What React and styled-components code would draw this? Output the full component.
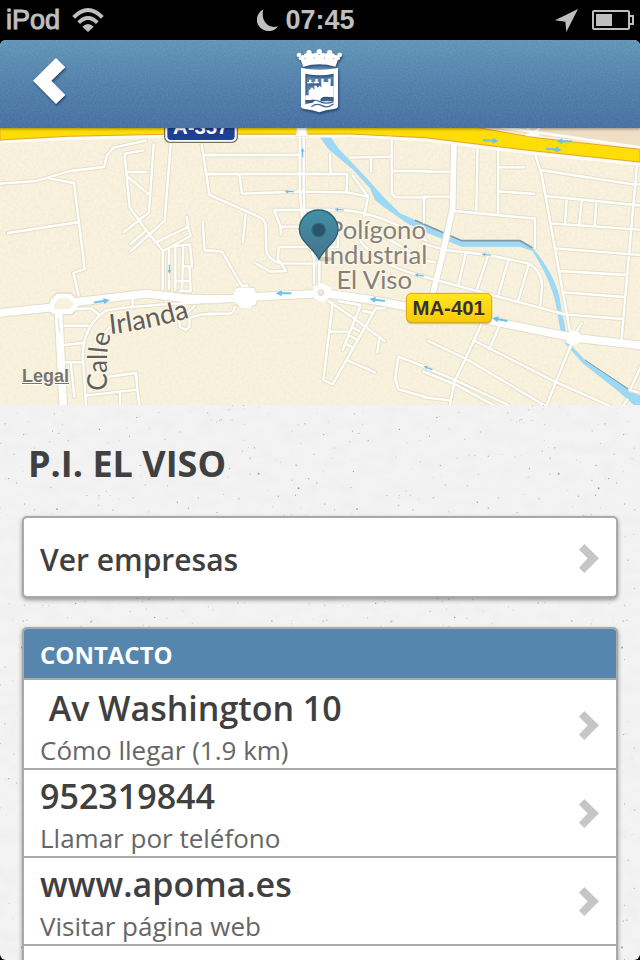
import styled, { createGlobalStyle } from 'styled-components';

const GlobalStyle = createGlobalStyle`
    * {
        box-sizing: border-box;
    }
    body {
        margin: 0;
        background: #000;
        font-family: 'Open Sans', 'Noto Sans', sans-serif;
    }
    h1, h2, ul {
        margin: 0;
        padding: 0;
    }
`;

const Phone = styled.div`
    display: flex;
    flex-direction: column;
    height: 100vh;
    overflow: hidden;
`;

const StatusBar = styled.div`
    display: grid;
    grid-template-columns: 1fr auto 1fr;
    align-items: center;
    flex: none;
    gap: 7px;
    height: 40px;
    padding: 0 6px;
    color: #bfbfbf;
    font-family: 'Liberation Sans', sans-serif;
    font-size: 27px;
    line-height: 38px;
`;

const StatusGroup = styled.div`
    display: flex;
    align-items: center;
    justify-content: ${({ $end }) => ($end ? 'flex-end' : 'flex-start')};
    gap: ${({ $end }) => ($end ? 14 : 12)}px;

    > :nth-child(3) {
        margin-left: auto;
    }
`;

const Carrier = styled.span`
    -webkit-text-stroke: 1px #bfbfbf;
`;

const Clock = styled.time`
    font-weight: 700;
`;

const Screen = styled.div`
    display: flex;
    flex-direction: column;
    flex: 1;
    min-height: 0;
    overflow: hidden;
    border-radius: 6px;
    background: #f3f3f3;
`;

const Header = styled.header`
    position: relative;
    z-index: 1;
    display: grid;
    grid-template-columns: 1fr auto 1fr;
    align-items: center;
    flex: none;
    height: 88px;
    padding-bottom: 6px;
    background: linear-gradient(#6194b6, #507fab 50%, #4470a0);
    box-shadow: 0 1px 3px rgba(0, 0, 0, 0.4);
`;

const Texture = styled.svg`
    position: absolute;
    inset: 0;
    width: 100%;
    height: 100%;
    pointer-events: none;
`;

const BackButton = styled.button`
    justify-self: start;
    padding: 10px 33px;
    border: 0;
    background: none;
    line-height: 0;
    cursor: pointer;
`;

const ShadowSvg = styled.svg`
    position: relative;
    display: block;
    filter: drop-shadow(1px 2px 1px rgba(20, 40, 80, 0.6));
`;

const MapBox = styled.section`
    position: relative;
    flex: none;
    height: 277px;
    background: #f8f1dd;
`;

const MapSvg = styled.svg`
    display: block;
    width: 100%;
    height: 100%;
`;

const LegalLink = styled.a`
    position: absolute;
    left: 22px;
    bottom: 18px;
    color: #77756f;
    font-family: 'Liberation Sans', sans-serif;
    font-size: 18px;
    font-weight: 700;
    line-height: 21px;
    text-shadow: 0 1px 0 #fff;
`;

const Content = styled.main`
    position: relative;
    flex: 1;
    padding: 34px 22px 0;
`;

const Title = styled.h1`
    position: relative;
    padding: 0 6px;
    color: #404040;
    font-size: 36px;
    font-weight: 700;
    line-height: 50px;
`;

const Card = styled.div`
    position: relative;
    margin-top: ${({ $top }) => $top}px;
    overflow: hidden;
    border: 2px solid #a9a9a9;
    border-radius: 5px;
    background: #fff;
    box-shadow: 0 2px 4px rgba(0, 0, 0, 0.4);
`;

const CardHeading = styled.h2`
    height: 51px;
    padding: 1px 16px 0;
    border-bottom: 2px solid #a9a9a9;
    background: #5686ad;
    color: #fff;
    font-size: 24px;
    font-weight: 700;
    line-height: 49px;
`;

const RowLink = styled.a`
    display: flex;
    align-items: center;
    justify-content: space-between;
    height: ${({ $tall }) => ($tall ? 88 : 78)}px;
    padding: ${({ $tall }) => ($tall ? 0 : 2)}px 17px 0 16px;
    border-bottom: ${({ $tall }) => ($tall ? '2px solid #a9a9a9' : '0')};
    color: #404040;
    text-decoration: none;
`;

const RowText = styled.span`
    display: flex;
    flex-direction: column;
    padding-top: ${({ $top }) => $top}px;
    font-size: 30px;
    font-weight: 600;
`;

const RowTitle = styled.span`
    font-size: 34px;
    line-height: 46px;
    white-space: pre;
`;

const RowHint = styled.span`
    color: #666;
    font-size: 26px;
    font-weight: 400;
    line-height: 38px;
`;

const List = styled.ul`
    padding-top: 2px;
    list-style: none;
`;

// The map is drawn in three tiles, each with its own origin
const tiles = [
    {
        x: 0,
        minor: `M-5 176L108 168L210 138L312 126L320 92L340 68L438 47
            M148 160L222 174L254 432L220 444L236 512 M24 324L238 291
            M430 76L374 86L380 155L389 248L448 328L490 378 M380 141H440 M382 155L447 208
            M461 58L447 262L372 321 M512 58L494 287L391 379 M434 320L391 357
            M468 352L564 306L560 275 M564 306L572 332L490 378
            M488 378V492 M507 372V492 M526 366V494 M550 360L546 498
            M520 364L570 358L576 424H548 M568 424L572 498H540 M526 468H570
            M605 58L628 208L645 216 M612 90H650 M622 147H650 M608 290L614 376L645 378
            M230 552L275 550L295 568 M645 530C520 536 380 545 320 556C265 590 250 640 248 690L258 840
            M398 525V545 M194 602H264 M190 660L248 654 M194 712H250 M212 712L223 815
            M258 812L412 794L418 840 M360 800V840 M320 756L408 744L412 794
            M300 690V640L330 606 M560 565L584 543 M645 568H605L570 578L535 575L540 606L558 615L568 605V580`,
        major: 'M-5 564L150 548 M220 532L440 506L560 520L650 523 M176 568L190 850',
    },
    {
        x: 630,
        minor: `M-5 90H270 M-5 147H412 M88 150L96 206L265 200L412 202L474 215L462 275
            M412 147L410 202 M428 152L474 215 M360 88L362 142
            M269 35V190L278 300L312 400V475 M281 35V190L285 300L328 410V475
            M193 255H400C480 262 540 285 650 347 M193 258L212 305V330 M212 305H270
            M-5 208L150 277Q166 285 167 300L169 378Q172 400 210 415L320 416
            M107 268L98 352 M135 414L182 440L228 438L204 402L206 366H384V335
            M-5 376L36 380L95 482H112 M-5 566H62Q72 564 74 545
            M408 32L545 36V205L555 217H650 M420 98L540 95 M483 98V140 M545 138H650 M642 217V290
            M440 310C520 322 560 362 650 405 M448 340Q450 352 480 378C530 420 580 440 650 457
            M355 528L432 580L524 648 M508 640L502 682 M368 535L340 765L368 778L497 550H525
            M460 558L485 563 M360 620H412 M452 540L398 675 M425 606L448 618 M416 630L437 642 M406 655L430 668
            M410 705L495 742 M385 528L450 540 M650 727L565 695L556 760L565 793L650 817`,
        major: 'M-5 523L110 517L300 507L332 503L480 524L650 556 M85 500H125L128 530H90Z',
    },
    {
        x: 1275,
        minor: `M-5 140H72 M-5 215H75 M158 50L154 255 M220 55L219 268 M222 127H298 M222 199L328 207
            M88 258L330 281V370 M-5 355L60 375L190 390L310 415C340 430 350 455 351 485L346 540
            M-5 455L220 515L420 568L595 582 M122 385L100 480 M188 395L157 490 M250 405L220 508
            M312 415L280 525 M-5 405L30 412 M636 115L590 640 M345 135L625 178H650
            M362 213L650 242 M377 295L650 314 M390 370L650 390 M404 438L605 450 M418 502L598 516
            M425 228L420 295 M470 230L463 298 M514 234L509 302 M305 5L318 28L350 5
            M170 595L120 705L88 770L75 840 M222 605L193 672 M150 648L390 770L560 845
            M10 648L130 705L365 845 M440 655L365 840 M470 595L448 630
            M-5 725L90 765L250 840 M-5 740L90 778L215 845 M-5 817L75 826
            M650 720L615 795L640 802 M606 825L596 840 M328 80L350 150L435 620`,
        avenue: 'M87 40L83 250L50 400L20 520',
        major: 'M170 582L440 637L650 662',
    },
];

// x, y, turn in degrees, and whether the arrow stands on a main road
const arrows = [
    [305, 529, -8, true], [508, 432, 90], [908, 83, -90], [868, 200, 180], [1018, 254, 184],
    [851, 505, 180, true], [1132, 525, 188, true], [1500, 584, 190, true], [1258, 451, 190],
    [1472, 47, 3, true], [1693, 49, 182, true], [1661, 73, 5, true], [1459, 389, 186], [1284, 729, 200],
];

const roundabout = 'M154 552L158 530L174 513H208L226 530V546L212 560H160Z';

const contacts = [
    { title: '\u00a0Av Washington 10', hint: 'Cómo llegar (1.9 km)', href: '#mapa' },
    { title: '952319844', hint: 'Llamar por teléfono', href: 'tel:952319844' },
    { title: 'www.apoma.es', hint: 'Visitar página web', href: 'http://www.apoma.es' },
];

// Repeatable scatter of grey grains for the plaster background
const grains = Array.from({ length: 260 }, (_, i) => {
    const rand = (n) => {
        const v = Math.sin((i + 1) * n) * 43758.5453;
        return v - Math.floor(v);
    };
    return { x: rand(12.9898) * 300, y: rand(78.233) * 300, r: 0.6 + rand(37.719) ** 8 / 2, o: 0.15 + rand(93.989) ** 2 * 0.5 };
});

function Roads({ kind, width, color }) {
    return (
        <g fill="none" stroke={color} strokeWidth={width} strokeLinejoin="round" strokeLinecap="round">
            {tiles.map((tile) => (
                <path key={tile.x} transform={`translate(${tile.x} 0)`} d={tile[kind]} />
            ))}
        </g>
    );
}

function Chevron() {
    return (
        <svg width="20" height="29" viewBox="0 0 60 87" aria-hidden="true">
            <path d="M16 0L60 43L16 87L0 71L26 43L0 17Z" fill="#c6c6c6" />
        </svg>
    );
}

function Crest() {
    return (
        <ShadowSvg width="48" height="66" viewBox="34 26 144 198" role="img" aria-label="Ayuntamiento">
            <g fill="#fff">
                <circle cx="43" cy="47" r="7" />
                <circle cx="54" cy="53" r="6" />
                <circle cx="47" cy="57" r="5" />
                <circle cx="65" cy="50" r="8" />
                <circle cx="73" cy="40" r="8" />
                <circle cx="82" cy="50" r="8" />
                <circle cx="94" cy="48" r="8" />
                <circle cx="104" cy="37" r="8" />
                <circle cx="114" cy="48" r="8" />
                <circle cx="126" cy="50" r="8" />
                <circle cx="135" cy="40" r="8" />
                <circle cx="143" cy="50" r="8" />
                <circle cx="154" cy="53" r="6" />
                <circle cx="165" cy="47" r="7" />
                <circle cx="161" cy="57" r="5" />
                <path d="M46 56L56 53L62 60L70 46H78L88 58L98 46H110L120 58L130 46H138L146 60L152 53L162 56L152 82Q104 68 56 82Z" />
                <path
                    fillRule="evenodd"
                    d="M49 86Q104 97 160 86V202Q158 207 148 209Q122 212 104 219Q85 212 60 209Q50 207 49 202Z
                        M62 103Q104 113 147 103V198Q104 208 62 198Z"
                />
                <path d="M62 182V168H72V154L82 144L89 152V141L94 138L99 145L105 139L110 145V118H117V128H131V118H138V140H147V174L125 172Q104 172 108 186H147V200Q104 208 62 200V194L84 190L92 182Z" />
                <path d="M73 121h7v10h-7zM68 128h16v4h-16zM92 119h7v10h-7zM87 127h16v5h-16z" />
            </g>
            <g fill="none" stroke="#3f6790" strokeWidth="4">
                <path d="M66 187Q86 178 106 187T146 187M80 202Q96 190 112 199T146 194M112 177Q126 182 144 176" />
            </g>
        </ShadowSvg>
    );
}

function StreetMap() {
    return (
        <MapSvg viewBox="0 9 1920 831" preserveAspectRatio="xMidYMid slice" role="img" aria-label="Mapa">
            <defs>
                <linearGradient id="pin" x2="0" y2="1">
                    <stop offset="0" stopColor="#4390a6" />
                    <stop offset="1" stopColor="#46748c" />
                </linearGradient>
                <linearGradient id="yellow" x2="0" y2="1">
                    <stop offset="0" stopColor="#ffe720" />
                    <stop offset="1" stopColor="#fbc908" />
                </linearGradient>
                <path id="irlanda" d="M330 627Q460 614 620 562" />
                <path id="calle" d="M322 797V690Q322 650 346 600" />
                <filter id="paper">
                    <feTurbulence type="fractalNoise" baseFrequency="0.12" numOctaves="2" />
                    <feColorMatrix values="0 0 0 0 .6  0 0 0 0 .5  0 0 0 0 .3  .5 0 0 0 -.17" />
                </filter>
            </defs>
            <rect width="1920" height="850" fill="#f9f2de" />
            <rect width="1920" height="850" filter="url(#paper)" opacity=".4" />
            <path d="M1400 0H1920V65L1680 40Z" fill="#efdfc5" />
            <path
                d="M955 30H988L1015 70L1105 165L1150 215L1200 265L1275 298L1385 345H1560L1600 372C1652 430 1680 500 1682 540L1698 620H1682L1668 540C1655 480 1630 430 1597 378L1560 365H1385L1275 321L1225 297L1150 245L1125 225L1110 190L1060 135L985 72Z
                    M1690 650L1712 660L1755 705L1925 815V860L1850 795L1750 716Z"
                fill="#9dd8f5"
            />
            <path d="M1245 286L1385 347H1560L1598 369" fill="none" stroke="#8098a6" strokeWidth="5" />
            <path d="M1755 705L1890 796" fill="none" stroke="#8098a6" strokeWidth="3" />
            <Roads kind="minor" width="13" color="#e4e0ca" />
            <Roads kind="avenue" width="23" color="#e2decb" />
            <Roads kind="major" width="29" color="#e2decb" />
            <path d={roundabout} fill="none" stroke="#e2decb" strokeWidth="22" strokeLinejoin="round" />
            <Roads kind="minor" width="7" color="#fff" />
            <Roads kind="avenue" width="17" color="#fff" />
            <Roads kind="major" width="23" color="#fff" />
            <path d="M175 580L178 622" stroke="#e2decb" strokeWidth="3" />
            <path d={roundabout} fill="#f8f1dd" stroke="#fff" strokeWidth="14" strokeLinejoin="round" />
            <path d="M700 505L716 488H750L768 508L764 530L750 548H724L706 532Z" fill="#fff" />
            <path d="M940 485L965 475L992 488L998 510L970 532L942 520Z" fill="#fff" />
            <circle cx="963" cy="503" r="8" fill="#f4edd9" stroke="#d9d3be" strokeWidth="3" />
            <circle cx="1720" cy="638" r="22" fill="#fff" />
            <path d="M0 51L200 41L480 35L1050 33L1275 45L1495 73L1605 86L1920 118M1500 6L1920 67" fill="none" stroke="#fffdf4" strokeWidth="8" />
            <path d="M0 0H1390L1605 38L1920 73V111L1605 78L1495 65L1275 38L1050 27L480 28L200 34L0 45Z" fill="#ffde08" stroke="#e6a52b" strokeWidth="3" />
            <path d="M884 34L890 24V5H920V24L926 34Z" fill="#fff" stroke="#e2decb" strokeWidth="2" />
            <path d="M1580 26H1614L1620 34H1576Z" fill="#fff" />
            {arrows.map(([x, y, turn, main]) => (
                <path
                    key={`${x}-${y}`}
                    transform={`translate(${x} ${y}) rotate(${turn}) scale(${main ? 1 : 0.6})`}
                    d="M-23 -3H6V-9L24 0L6 9V3H-23Z"
                    fill="#6bc1ee"
                />
            ))}
            <g fontFamily="Lato, sans-serif" fill="#605e5a" stroke="#fbf6e6" strokeWidth="8" paintOrder="stroke" strokeLinejoin="round">
                <text fontSize="82"><textPath href="#irlanda">Irlanda</textPath></text>
                <text fontSize="79"><textPath href="#calle">Calle</textPath></text>
                <g fill="#85817a" fontSize="77">
                    <text x="1278" y="342" textAnchor="end">Polígono</text>
                    <text x="1282" y="418" textAnchor="end">Industrial</text>
                    <text x="1236" y="493" textAnchor="end">El Viso</text>
                </g>
            </g>
            <rect x="494" y="-30" width="218" height="82" rx="16" fill="#fff" stroke="#77736a" strokeWidth="4" />
            <rect x="502" y="-30" width="202" height="75" rx="11" fill="#1e3f96" />
            <g fontFamily="'Liberation Sans', sans-serif" fontWeight="700" textAnchor="middle">
                <text x="602" y="28" fontSize="61" fill="#fff">A-357</text>
                <rect x="1219" y="511" width="257" height="87" rx="16" fill="#a8a18a" opacity=".6" />
                <rect x="1219" y="505" width="256" height="87" rx="15" fill="url(#yellow)" stroke="#d9a610" strokeWidth="3" />
                <text x="1346" y="569" fontSize="61" fill="#333">MA-401</text>
            </g>
            <ellipse cx="975" cy="402" rx="22" ry="7" fill="#000" opacity=".15" />
            <path d="M957 403C938 365 898 350 898 313A58 58 0 0 1 1014 313C1014 350 976 365 957 403Z" fill="url(#pin)" stroke="#285e72" strokeWidth="4" />
            <circle cx="956" cy="315" r="20" fill="#2d5368" stroke="#2b6a80" strokeWidth="4" />
        </MapSvg>
    );
}

export default function App() {
    return (
        <Phone>
            <GlobalStyle />
            <StatusBar>
                <StatusGroup>
                    <Carrier>iPod</Carrier>
                    <svg width="32" height="24" viewBox="0 0 96 72" fill="none" stroke="#bfbfbf" strokeWidth="12" aria-hidden="true">
                        <path d="M5 28Q48 -16 91 28M20 44Q48 16 76 44" />
                        <path d="M31 56Q48 40 65 56L48 72Z" fill="#bfbfbf" stroke="none" />
                    </svg>
                    <svg width="21" height="22" viewBox="0 0 63 66" aria-hidden="true">
                        <path d="M19 1C-4 14 -6 42 10 56C28 72 54 68 63 52C48 56 35 53 27 43C17 32 15 16 19 1Z" fill="#bfbfbf" />
                    </svg>
                </StatusGroup>
                <Clock>07:45</Clock>
                <StatusGroup $end>
                    <svg width="23" height="23" viewBox="0 0 69 69" aria-hidden="true">
                        <path d="M69 0L34 69L31 38L0 34Z" fill="#bfbfbf" />
                    </svg>
                    <svg width="42" height="20" viewBox="0 0 42 20" aria-hidden="true">
                        <rect x="1" y="1" width="36" height="18" rx="1" fill="none" stroke="#bfbfbf" strokeWidth="2" />
                        <rect x="4" y="4" width="16" height="12" fill="#bfbfbf" />
                        <path d="M38 6H41V14H38" fill="none" stroke="#bfbfbf" strokeWidth="2" />
                    </svg>
                </StatusGroup>
            </StatusBar>
            <Screen>
                <Header>
                    <Texture aria-hidden="true">
                        <filter id="noise">
                            <feTurbulence type="fractalNoise" baseFrequency="0.6" numOctaves="2" />
                            <feColorMatrix values="0 0 0 0 1  0 0 0 0 1  0 0 0 0 1  .5 0 0 0 -.15" />
                        </filter>
                        <rect width="100%" height="100%" filter="url(#noise)" opacity=".3" />
                    </Texture>
                    <BackButton aria-label="Volver">
                        <ShadowSvg width="33" height="46" viewBox="0 0 99 138">
                            <path d="M69 0L97 28L55 68L97 111L69 138L0 68Z" fill="#fff" />
                        </ShadowSvg>
                    </BackButton>
                    <Crest />
                </Header>
                <MapBox>
                    <StreetMap />
                    <LegalLink href="#legal">Legal</LegalLink>
                </MapBox>
                <Content>
                    <Texture aria-hidden="true">
                        <pattern id="grains" width="300" height="300" patternUnits="userSpaceOnUse">
                            {grains.map(({ x, y, r, o }) => (
                                <circle key={x} cx={x} cy={y} r={r} fill="#555" opacity={o} />
                            ))}
                        </pattern>
                        <filter id="plaster">
                            <feTurbulence type="fractalNoise" baseFrequency="0.05 0.08" numOctaves="4" />
                            <feColorMatrix values="0 0 0 0 .5  0 0 0 0 .5  0 0 0 0 .5  .5 0 0 0 -.18" />
                        </filter>
                        <rect width="100%" height="100%" filter="url(#plaster)" opacity=".25" />
                        <rect width="100%" height="100%" fill="url(#grains)" />
                    </Texture>
                    <Title>P.I. EL VISO</Title>
                    <Card $top={27}>
                        <RowLink href="#empresas">
                            <RowText $top={2}>Ver empresas</RowText>
                            <Chevron />
                        </RowLink>
                    </Card>
                    <Card $top={29}>
                        <CardHeading>CONTACTO</CardHeading>
                        <List>
                            {contacts.map(({ title, hint, href }) => (
                                <li key={title}>
                                    <RowLink href={href} $tall>
                                        <RowText $top={4}>
                                            <RowTitle>{title}</RowTitle>
                                            <RowHint>{hint}</RowHint>
                                        </RowText>
                                        <Chevron />
                                    </RowLink>
                                </li>
                            ))}
                            <li>
                                <RowLink as="div" $tall />
                            </li>
                        </List>
                    </Card>
                </Content>
            </Screen>
        </Phone>
    );
}
